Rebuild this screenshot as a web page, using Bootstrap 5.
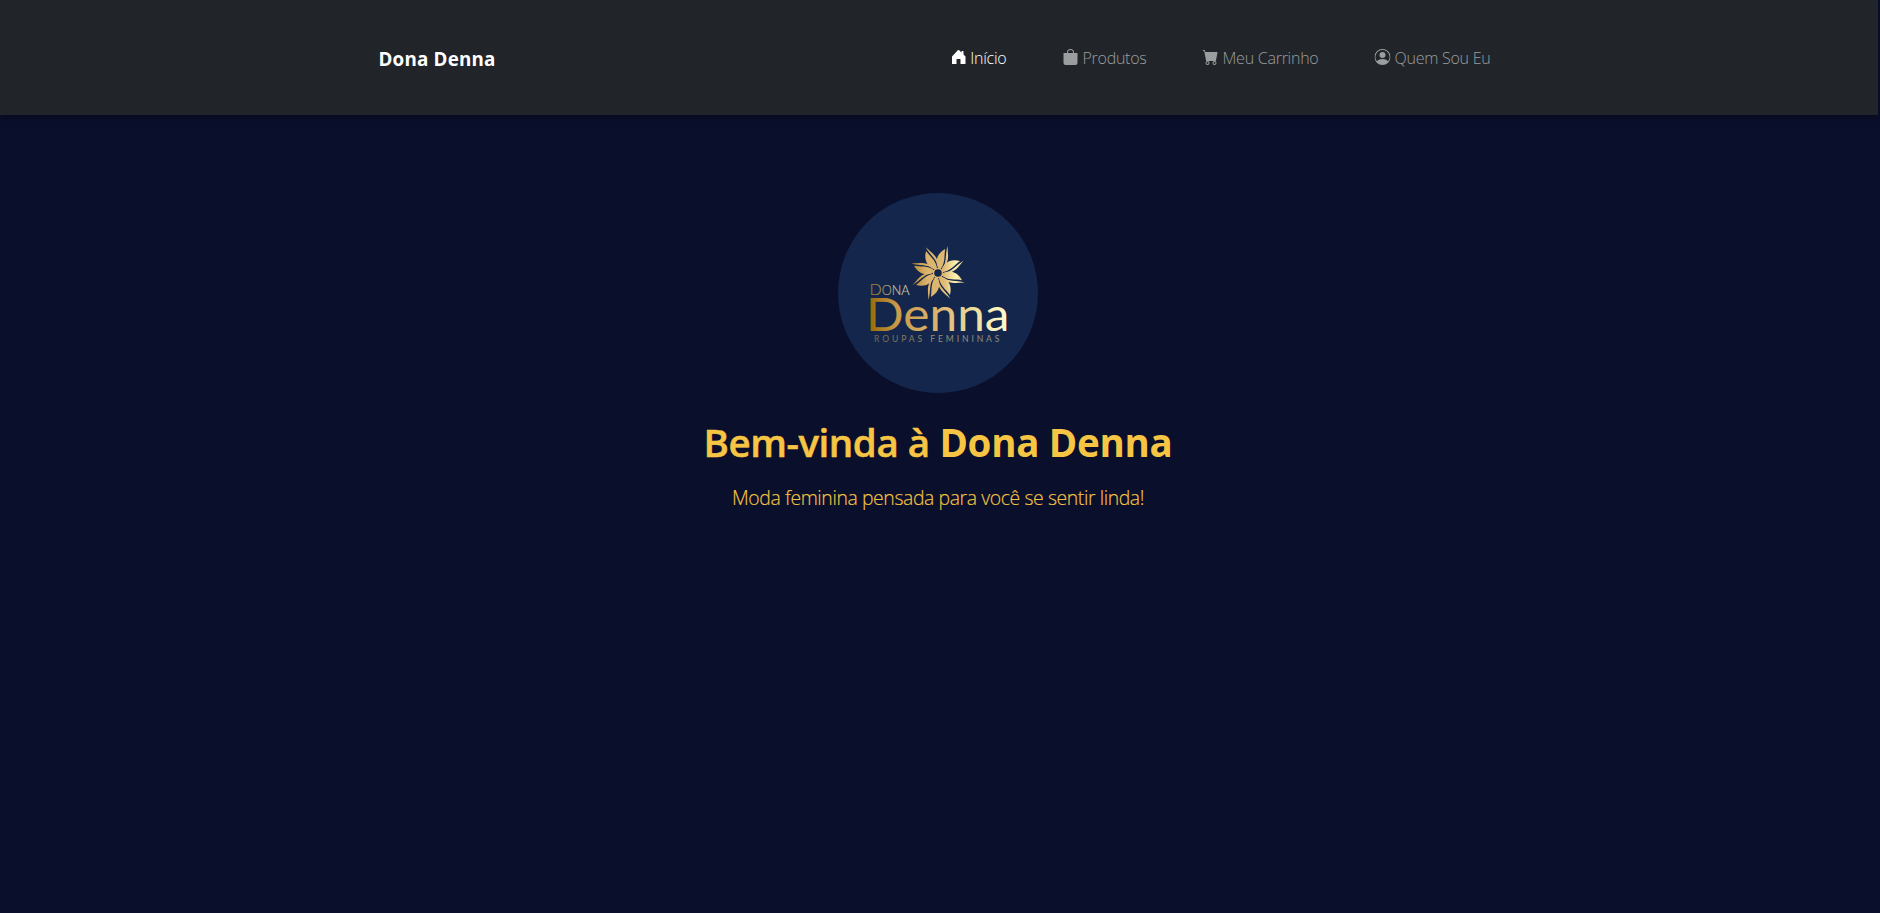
<!DOCTYPE html>
<html lang="pt-BR">
<head>
<meta charset="utf-8">
<meta name="viewport" content="width=device-width, initial-scale=1">
<title>Dona Denna</title>
<link href="https://cdn.jsdelivr.net/npm/bootstrap@5.3.0/dist/css/bootstrap.min.css" rel="stylesheet">
<style>
body{background:#0a0f2c;font-family:"Open Sans","Noto Sans",sans-serif;min-height:913px;overflow:hidden;padding-right:2px}
.topbar{height:115px;box-shadow:0 2px 8px rgba(0,0,0,.4)}
.topbar .inner{width:1112px;margin:0 auto;transform:translateX(-4.5px)}
.topbar .navbar-brand{font-weight:700;font-size:18.8px;letter-spacing:.2px;padding:0;margin:3px 0 0}
.topbar .navbar-nav{gap:56px}
.topbar .nav-link{font-weight:300;font-size:16px;line-height:24px;letter-spacing:-.25px;padding:0!important;display:flex;gap:4px;white-space:nowrap;color:#9b9d9f}
.topbar .nav-link.active{color:#fff}
.topbar svg{width:16px;height:16px;margin-top:3px;fill:currentColor}
.hero{color:#f7c544;padding:78px 2px 0 0}
.logo{width:200px;height:200px;display:block}
.hero h1{font-size:38.5px;font-weight:700;line-height:48px;letter-spacing:-.3px;margin:25px 0 0}
.hero h1 .greet{font-weight:600;letter-spacing:-.45px;-webkit-text-stroke:.5px currentColor}
.hero p{font-size:19.4px;font-weight:300;line-height:30px;letter-spacing:-.4px;-webkit-text-stroke:.15px currentColor;margin:17px 0 0}
</style>
</head>
<body>
<nav class="navbar navbar-expand navbar-dark bg-dark topbar p-0">
<div class="inner d-flex align-items-center justify-content-between">
<a class="navbar-brand" href="#">Dona Denna</a>
<ul class="navbar-nav">
<li class="nav-item"><a class="nav-link active" href="#"><svg viewBox="0 0 16 16"><path d="M7.3 1.3a1 1 0 0 1 1.4 0L11 3.6V2.5a.5.5 0 0 1 .5-.5h1a.5.5 0 0 1 .5.5v3.1l2 2v6.9a.5.5 0 0 1-.5.5H10v-4.5a.5.5 0 0 0-.5-.5h-3a.5.5 0 0 0-.5.5V15H2a.5.5 0 0 1-.5-.5V7.6z"/></svg><span>Início</span></a></li>
<li class="nav-item"><a class="nav-link" href="#"><svg viewBox="0 0 16 16"><path d="M8 1a2.5 2.5 0 0 1 2.5 2.5V4h-5v-.5A2.5 2.5 0 0 1 8 1m3.5 3v-.5a3.5 3.5 0 1 0-7 0V4H1v10a2 2 0 0 0 2 2h10a2 2 0 0 0 2-2V4z"/></svg><span>Produtos</span></a></li>
<li class="nav-item"><a class="nav-link" href="#"><svg viewBox="0 0 16 16"><path d="M0 1.5A.5.5 0 0 1 .5 1H2a.5.5 0 0 1 .485.379L2.89 3H14.5a.5.5 0 0 1 .491.592l-1.5 8A.5.5 0 0 1 13 12H4a.5.5 0 0 1-.491-.408L2.01 3.607 1.61 2H.5a.5.5 0 0 1-.5-.5M5 12a2 2 0 1 0 0 4 2 2 0 0 0 0-4m7 0a2 2 0 1 0 0 4 2 2 0 0 0 0-4m-7 1a1 1 0 1 1 0 2 1 1 0 0 1 0-2m7 0a1 1 0 1 1 0 2 1 1 0 0 1 0-2"/></svg><span>Meu Carrinho</span></a></li>
<li class="nav-item"><a class="nav-link" href="#"><svg viewBox="0 0 16 16"><path d="M11 6a3 3 0 1 1-6 0 3 3 0 0 1 6 0"/><path fill-rule="evenodd" d="M0 8a8 8 0 1 1 16 0A8 8 0 0 1 0 8m8-7a7 7 0 0 0-5.468 11.37C3.242 11.226 4.805 10 8 10s4.757 1.225 5.468 2.37A7 7 0 0 0 8 1"/></svg><span>Quem Sou Eu</span></a></li>
</ul>
</div>
</nav>
<main class="hero d-flex flex-column align-items-center text-center">
<svg class="logo" viewBox="0 0 200 200" role="img" aria-label="Dona Denna Roupas Femininas">
<defs>
<linearGradient id="gold" gradientUnits="userSpaceOnUse" x1="32" y1="0" x2="169" y2="0"><stop offset="0" stop-color="#9a6a0c"/><stop offset=".2" stop-color="#c99b4a"/><stop offset=".5" stop-color="#dcb470"/><stop offset=".75" stop-color="#ecdc9c"/><stop offset="1" stop-color="#fffbd0"/></linearGradient>
<linearGradient id="petals" gradientUnits="userSpaceOnUse" x1="74" y1="0" x2="126" y2="0"><stop offset="0" stop-color="#b98a35"/><stop offset=".3" stop-color="#dcb46c"/><stop offset=".6" stop-color="#dcb872"/><stop offset=".85" stop-color="#fff3b4"/><stop offset="1" stop-color="#e6cf88"/></linearGradient>
<linearGradient id="donag" gradientUnits="userSpaceOnUse" x1="33" y1="0" x2="71" y2="0"><stop offset="0" stop-color="#9a7228"/><stop offset=".5" stop-color="#b5a57c"/><stop offset="1" stop-color="#d8d3ba"/></linearGradient>
<linearGradient id="tag" gradientUnits="userSpaceOnUse" x1="36" y1="0" x2="162" y2="0"><stop offset="0" stop-color="#6d6551"/><stop offset=".5" stop-color="#9c8c6c"/><stop offset="1" stop-color="#8d9088"/></linearGradient>
<g id="pt" fill="#fff"><path d="M0-3.500C-6.500-8-8.500-17-1.500-25C-.5-18.500 4-12 .8-3.500z"/><path d="M2.400-6C4.800-13 .5-19-.3-28.500C2.500-21.500 7.500-15 3.200-6z"/></g>
<mask id="flower" maskUnits="userSpaceOnUse" x="70" y="50" width="60" height="60">
<g transform="translate(100 80) rotate(20)">
<use href="#pt"/><use href="#pt" transform="rotate(45)"/><use href="#pt" transform="rotate(90)"/><use href="#pt" transform="rotate(135)"/><use href="#pt" transform="rotate(180)"/><use href="#pt" transform="rotate(225)"/><use href="#pt" transform="rotate(270)"/><use href="#pt" transform="rotate(315)"/>
</g>
<circle cx="100" cy="80" r="5.200" fill="#fff"/><circle cx="100" cy="80" r="3.800" fill="#000"/>
</mask>
</defs>
<circle cx="100" cy="100" r="100" fill="#14264b"/>
<rect x="70" y="50" width="60" height="60" fill="url(#petals)" mask="url(#flower)"/>
<g font-family="Lato, sans-serif">
<text x="31.500" y="101.500" font-size="16.500" font-weight="300" stroke="url(#donag)" stroke-width=".2" fill="url(#donag)" textLength="40" lengthAdjust="spacingAndGlyphs">D<tspan font-size="13">ONA</tspan></text>
<text x="28" y="138" font-size="45.500" font-weight="400" fill="url(#gold)" textLength="143.500" lengthAdjust="spacingAndGlyphs">Denna</text>
<text x="36" y="148.500" font-size="8.600" fill="url(#tag)" textLength="125.500" lengthAdjust="spacing">ROUPAS FEMININAS</text>
</g>
</svg>
<h1><span class="greet">Bem-vinda à</span> Dona Denna</h1>
<p>Moda feminina pensada para você se sentir linda!</p>
</main>
<script src="https://cdn.jsdelivr.net/npm/bootstrap@5.3.0/dist/js/bootstrap.bundle.min.js"></script>
</body>
</html>
